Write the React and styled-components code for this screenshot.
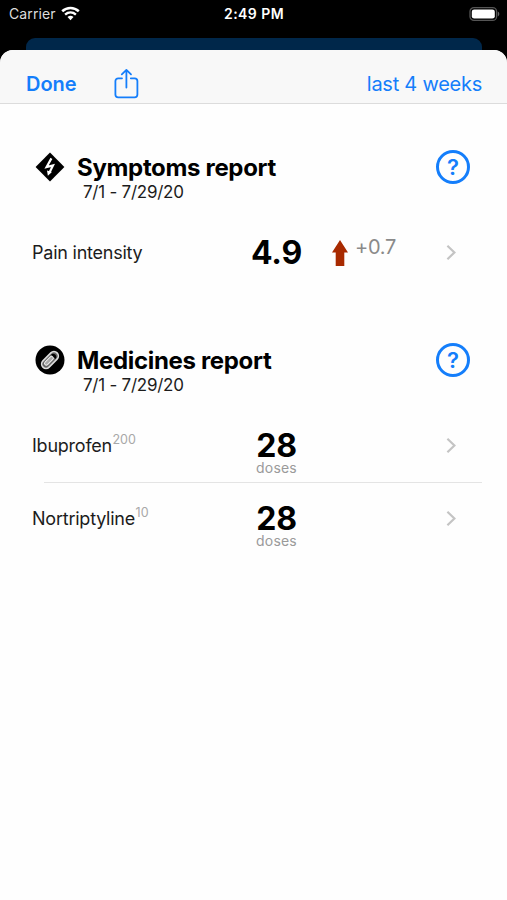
import React from "react";
import styled, { createGlobalStyle } from "styled-components";

const GlobalStyle = createGlobalStyle`
  * {
    box-sizing: border-box;
  }

  body {
    margin: 0;
    background: #000;
    font-family: Inter, "Liberation Sans", sans-serif;
    color: #000;
  }
`;

const Screen = styled.div`
  display: flex;
  flex-direction: column;
  height: 900px;
  overflow: hidden;
`;

const StatusBar = styled.header`
  display: grid;
  grid-template-columns: 1fr auto 1fr;
  align-items: center;
  height: 28px;
  margin-bottom: 10px;
  padding: 0 7px 0 9px;
  color: #fff;
  font-size: 14px;
  line-height: 28px;
`;

const Carrier = styled.div`
  display: flex;
  align-items: center;
  gap: 5px;
  color: #ddd;
  letter-spacing: 0.1px;
`;

const Clock = styled.div`
  margin-left: -1px;
  font-weight: 600;
  letter-spacing: 0.45px;
`;

const Battery = styled.svg`
  justify-self: end;
`;

const BackCard = styled.div`
  flex: none;
  height: 12px;
  margin: 0 25px 0 26px;
  border-radius: 9px 9px 0 0;
  background: #00274a;
`;

const Sheet = styled.main`
  flex: 1;
  border-radius: 13px 13px 0 0;
  background: #fefefe;
  overflow: hidden;
`;

const Toolbar = styled.nav`
  display: flex;
  align-items: center;
  height: 54px;
  padding: 14px 25px 0 26px;
  border-bottom: 1px solid #dcdcdc;
  background: #f8f8f8;
`;

const ToolbarButton = styled.button`
  padding: 0;
  border: 0;
  background: none;
  color: #147efb;
  font-family: inherit;
  font-size: 20px;
  font-weight: ${({ $bold }) => ($bold ? 600 : 400)};
  line-height: 24px;
  letter-spacing: ${({ $spacing }) => $spacing || "0"};
`;

const ShareButton = styled(ToolbarButton)`
  display: flex;
  margin: 0 auto 0 37px;
`;

const Section = styled.section`
  margin-top: ${({ $first }) => ($first ? "46px" : "54px")};
`;

const SectionHead = styled.div`
  display: grid;
  grid-template-columns: 42px 1fr 34px;
  height: 66px;
  padding: 0 37px 0 35px;
`;

const SectionIcon = styled.svg`
  margin-top: 2px;
`;

const Title = styled.h2`
  margin: 0;
  padding-top: 1px;
  font-size: 24px;
  font-weight: 700;
  line-height: 34px;
  letter-spacing: -0.33px;
`;

const DateRange = styled.div`
  margin-top: -3px;
  padding-left: 6px;
  color: #1c1c1c;
  font-size: 17px;
  line-height: 20px;
  letter-spacing: -0.25px;
`;

const HelpButton = styled.button`
  display: flex;
  align-items: center;
  justify-content: center;
  width: 34px;
  height: 34px;
  padding: 0;
  border: 3px solid #147efb;
  border-radius: 50%;
  background: none;
  color: #147efb;
  font-family: inherit;
  font-size: 22px;
  font-weight: 600;
  line-height: 28px;
`;

const Row = styled.div`
  display: grid;
  grid-template-columns: 189px 111px 1fr 11px;
  height: 73px;
  padding: 0 51px 0 32px;
`;

const Label = styled.div`
  align-self: center;
  padding-top: 1px;
  color: #1c1c1c;
  font-size: 18px;
  line-height: 22px;
  letter-spacing: -0.23px;
  white-space: nowrap;
`;

const Strength = styled.sup`
  margin-left: 0.5px;
  color: #a8a8a8;
  font-size: 12.5px;
  line-height: 0;
  letter-spacing: 0;
  vertical-align: 8.5px;
`;

const Value = styled.div`
  padding-top: 22px;
  font-size: 32px;
  font-weight: 700;
  line-height: 30px;
  letter-spacing: -0.2px;
  text-align: center;
`;

const Unit = styled.div`
  color: #9a9a9a;
  font-size: 14px;
  font-weight: 400;
  line-height: 14px;
  letter-spacing: 0.2px;
`;

const Trend = styled.div`
  display: flex;
  align-items: flex-start;
  gap: 7px;
  padding-top: 24px;
  color: #8a8a8a;
  font-size: 20px;
  line-height: 24px;
  letter-spacing: -0.3px;
`;

const TrendValue = styled.span`
  margin-top: -5px;
`;

const Chevron = styled.svg`
  align-self: center;
`;

const Divider = styled.hr`
  height: 1px;
  margin: 0 25px -1px 44px;
  border: 0;
  background: #e4e4e4;
`;

const WifiIcon = () => (
  <svg width="19" height="16" viewBox="0 0 19 16" fill="none" stroke="#fff">
    <path d="M1.2 5.2C6 .9 13 .9 17.8 5.2" strokeWidth="2.6" />
    <path d="M4.1 8.6C7.3 5.9 11.7 5.9 14.9 8.6" strokeWidth="2.5" />
    <path d="M6.5 11.1a4.4 4.4 0 0 1 6 0L9.5 14.3z" fill="#fff" stroke="none" />
  </svg>
);

const ShareIcon = () => (
  <svg
    width="26"
    height="31"
    viewBox="0.6 0 26 31"
    fill="none"
    stroke="#147efb"
    strokeWidth="1.8"
    strokeLinecap="round"
    strokeLinejoin="round"
  >
    <path d="M8.6 10.3H4.8a2.8 2.8 0 0 0-2.8 2.8v13.5a2.8 2.8 0 0 0 2.8 2.8h16.4a2.8 2.8 0 0 0 2.8-2.8V13.1a2.8 2.8 0 0 0-2.8-2.8h-3.8" />
    <path d="M13 19.5V2M8.4 6.4 13 1.9l4.6 4.5" />
  </svg>
);

const SymptomsIcon = () => (
  <SectionIcon width="30" height="30" viewBox="0 0 30 30">
    <path d="M15 .6 29.4 15 15 29.4.6 15z" />
    <path
      d="M16.4 6.4 11.6 15l6.4-1.6-3.6 7.4"
      fill="none"
      stroke="#fff"
      strokeWidth="2.2"
      strokeLinejoin="miter"
    />
    <path d="m12 18.6.9 5.2 4-3.7z" fill="#fff" />
  </SectionIcon>
);

const MedicinesIcon = () => (
  <SectionIcon width="30" height="30" viewBox="0 0 30 30">
    <circle cx="15" cy="15" r="14.5" />
    <g transform="rotate(-45 15 15)" fill="none">
      <rect x="5" y="10.6" width="20" height="8.8" rx="4.4" fill="#666" stroke="#ddd" strokeWidth="1.6" />
      <rect x="8.2" y="13" width="11" height="3.6" rx="1.8" fill="#aaa" stroke="#eee" strokeWidth="1" />
      <path d="M19.6 11.8c4 .5 4 5.9 0 6.4z" fill="#000" />
    </g>
  </SectionIcon>
);

const SectionHeader = ({ icon, title }) => (
  <SectionHead>
    {icon}
    <div>
      <Title>{title}</Title>
      <DateRange>7/1 - 7/29/20</DateRange>
    </div>
    <HelpButton>?</HelpButton>
  </SectionHead>
);

const ReportRow = ({ label, strength, value, unit, change }) => (
  <Row>
    <Label>
      {label}
      {strength && <Strength>{strength}</Strength>}
    </Label>
    <Value>
      {value}
      {unit && <Unit>{unit}</Unit>}
    </Value>
    <Trend>
      {change && (
        <>
          <svg width="16" height="26" viewBox="0 0 16 26">
            <path d="M8 0 16 12.5h-3.7V26H3.7V12.5H0z" fill="#a82a00" />
          </svg>
          <TrendValue>{change}</TrendValue>
        </>
      )}
    </Trend>
    <Chevron width="11" height="17" viewBox="0 0 11 17" fill="none" stroke="#c4c4c4" strokeWidth="2.2">
      <path d="M2.4 1.8 9.4 8.5l-7 6.7" />
    </Chevron>
  </Row>
);

const App = () => (
  <>
    <GlobalStyle />
    <Screen>
      <StatusBar>
        <Carrier>
          Carrier <WifiIcon />
        </Carrier>
        <Clock>2:49 PM</Clock>
        <Battery width="31" height="16" viewBox="0 0 31 16">
          <rect x="1" y="1.6" width="26.6" height="12.8" rx="4" fill="none" stroke="#555" strokeWidth="1.3" />
          <rect x="2.8" y="3.4" width="23" height="9.2" rx="2.4" fill="#fff" />
          <path d="M28.8 5.6c2 .8 2 4 0 4.8z" fill="#666" />
        </Battery>
      </StatusBar>
      <BackCard />
      <Sheet>
        <Toolbar>
          <ToolbarButton $bold>Done</ToolbarButton>
          <ShareButton aria-label="Share">
            <ShareIcon />
          </ShareButton>
          <ToolbarButton $spacing="-0.25px">last 4 weeks</ToolbarButton>
        </Toolbar>
        <Section $first>
          <SectionHeader icon={<SymptomsIcon />} title="Symptoms report" />
          <ReportRow label="Pain intensity" value="4.9" change="+0.7" />
        </Section>
        <Section>
          <SectionHeader icon={<MedicinesIcon />} title="Medicines report" />
          <ReportRow label="Ibuprofen" strength="200" value="28" unit="doses" />
          <Divider />
          <ReportRow label="Nortriptyline" strength="10" value="28" unit="doses" />
        </Section>
      </Sheet>
    </Screen>
  </>
);

export default App;
